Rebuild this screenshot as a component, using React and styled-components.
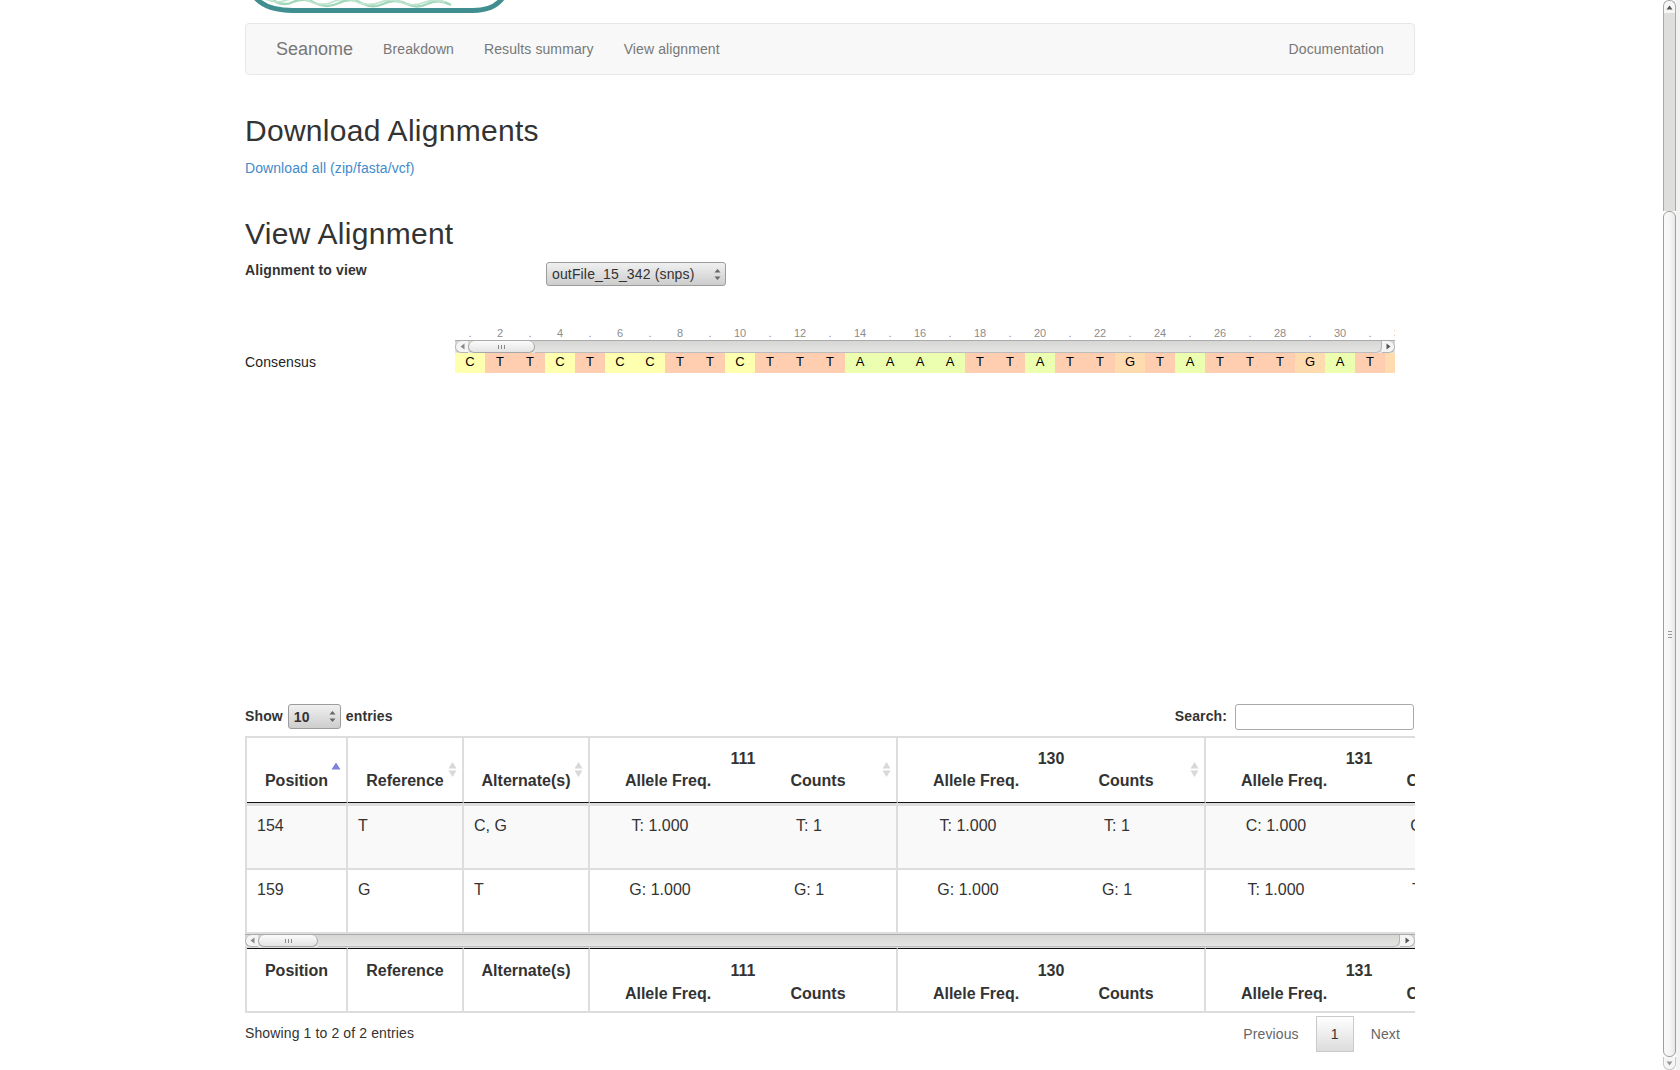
import React from "react";
import styled, { createGlobalStyle } from "styled-components";

const sequence = "CTTCTCCTTCTTTAAAATTATTGTATTTGATG".split("");

const baseColors = {
  A: "#ecffb0",
  C: "#ffffb0",
  G: "#ffdcb0",
  T: "#ffcdb0",
};

const samples = ["111", "130", "131"];

const rows = [
  { position: "154", reference: "T", alternates: "C, G", calls: ["T", "T", "C"] },
  { position: "159", reference: "G", alternates: "T", calls: ["G", "G", "T"] },
];

const Columns = () => (
  <colgroup>
    <col style={{ width: 101 }} />
    <col style={{ width: 116 }} />
    <col style={{ width: 126 }} />
    <col style={{ width: 308 }} />
    <col style={{ width: 308 }} />
    <col style={{ width: 308 }} />
  </colgroup>
);

const SortIcon = ({ active }) => (
  <SortMark>
    {active ? (
      <svg width="10" height="8" viewBox="0 0 10 8">
        <path d="M5 0.5 L9.5 7.5 L0.5 7.5 Z" fill="#7f7fdc" />
      </svg>
    ) : (
      <svg width="9" height="15" viewBox="0 0 9 15">
        <path d="M4.5 0 L8.5 6.5 L0.5 6.5 Z" fill="#d8d8d8" />
        <path d="M4.5 15 L8.5 8.5 L0.5 8.5 Z" fill="#d8d8d8" />
      </svg>
    )}
  </SortMark>
);

const SelectArrows = () => (
  <ArrowsMark>
    <svg width="7" height="13" viewBox="0 0 7 13">
      <path d="M3.5 1 L6.5 4.5 L0.5 4.5 Z" fill="#666" />
      <path d="M3.5 12 L6.5 8.5 L0.5 8.5 Z" fill="#666" />
    </svg>
  </ArrowsMark>
);

const HScroll = ({ thumb, endWidth }) => (
  <ScrollBar>
    <LeftCap>
      <svg width="5" height="7" viewBox="0 0 5 7">
        <path d="M4.5 0.5 L4.5 6.5 L0.5 3.5 Z" fill="#888" />
      </svg>
    </LeftCap>
    <ScrollThumb $width={thumb}>
      <Grip />
    </ScrollThumb>
    <ScrollTrack />
    <RightCap $width={endWidth}>
      <svg width="5" height="7" viewBox="0 0 5 7">
        <path d="M0.5 0.5 L0.5 6.5 L4.5 3.5 Z" fill="#555" />
      </svg>
    </RightCap>
  </ScrollBar>
);

const Logo = () => (
  <LogoClip>
    <svg width="270" height="14" viewBox="0 0 270 14">
      <path
        d="M28 0 q10 7 20 2 q12 -5 22 1 q12 6 24 0 q12 -6 22 0 q12 6 22 1 q12 -6 24 0 q10 5 20 0 q12 -6 24 1"
        fill="none"
        stroke="#a3d8bb"
        strokeWidth="2.4"
      />
      <path
        d="M20 -1 q12 5 22 1 q12 -4 24 2 q12 5 24 -1 q12 -4 22 1 q12 5 24 0 q10 -4 22 1 q12 4 22 -1 q10 -3 20 0"
        fill="none"
        stroke="#bfe5d0"
        strokeWidth="1.8"
      />
      <path
        d="M9 -4 Q20 10.5 48 10.5 L228 10.5 Q250 10.5 259 -4"
        fill="none"
        stroke="#418e91"
        strokeWidth="4.8"
      />
    </svg>
  </LogoClip>
);

const App = () => (
  <Shell>
    <GlobalStyle />
    <Main>
      <Logo />
      <Navbar>
        <Brand>Seanome</Brand>
        <NavLink>Breakdown</NavLink>
        <NavLink>Results summary</NavLink>
        <NavLink>View alignment</NavLink>
        <NavRight>
          <NavLink>Documentation</NavLink>
        </NavRight>
      </Navbar>

      <FirstHeading>Download Alignments</FirstHeading>
      <TextLink>Download all (zip/fasta/vcf)</TextLink>

      <SecondHeading>View Alignment</SecondHeading>
      <PickerRow>
        <PickerLabel>Alignment to view</PickerLabel>
        <SelectWrap $width={180}>
          <Select defaultValue="snps">
            <option value="snps">outFile_15_342 (snps)</option>
          </Select>
          <SelectArrows />
        </SelectWrap>
      </PickerRow>

      <Viewer>
        <ConsensusLabel>Consensus</ConsensusLabel>
        <ViewerTrack>
          <Ruler>
            {sequence.map((_, i) => (
              <RulerTick key={i}>{i % 2 === 1 ? i + 1 : "."}</RulerTick>
            ))}
          </Ruler>
          <HScroll thumb={67} endWidth={13} />
          <BaseRow>
            {sequence.map((base, i) => (
              <Base key={i} $color={baseColors[base]}>
                {base}
              </Base>
            ))}
          </BaseRow>
        </ViewerTrack>
      </Viewer>

      <TableControls>
        <ControlLabel>
          Show
          <SelectWrap $width={53}>
            <CountSelect defaultValue="10">
              <option value="10">10</option>
            </CountSelect>
            <SelectArrows />
          </SelectWrap>
          entries
        </ControlLabel>
        <ControlLabel>
          Search:
          <SearchInput type="text" />
        </ControlLabel>
      </TableControls>

      <TableClip>
        <HeadTable>
          <Columns />
          <thead>
            <tr>
              <HeadCell>
                Position
                <SortIcon active />
              </HeadCell>
              <HeadCell>
                Reference
                <SortIcon />
              </HeadCell>
              <HeadCell>
                Alternate(s)
                <SortIcon />
              </HeadCell>
              {samples.map((sample) => (
                <HeadCell key={sample}>
                  {sample}
                  <HeadSplit>
                    <span>Allele Freq.</span>
                    <span>Counts</span>
                  </HeadSplit>
                  <SortIcon />
                </HeadCell>
              ))}
            </tr>
          </thead>
          <tbody>
            {rows.map((row, index) => (
              <BodyRow key={row.position} $odd={index === 0}>
                <BodyCell $first={index === 0}>{row.position}</BodyCell>
                <BodyCell $first={index === 0}>{row.reference}</BodyCell>
                <BodyCell $first={index === 0}>{row.alternates}</BodyCell>
                {row.calls.map((call, i) => (
                  <BodyCell key={i} $first={index === 0}>
                    <CallSplit>
                      <span>{call}: 1.000</span>
                      <span>{call}: 1</span>
                    </CallSplit>
                  </BodyCell>
                ))}
              </BodyRow>
            ))}
          </tbody>
        </HeadTable>
        <HScroll thumb={60} endWidth={15} />
        <FootTable>
          <Columns />
          <tfoot>
            <tr>
              <FootCell>Position</FootCell>
              <FootCell>Reference</FootCell>
              <FootCell>Alternate(s)</FootCell>
              {samples.map((sample) => (
                <FootCell key={sample}>
                  {sample}
                  <FootSplit>
                    <span>Allele Freq.</span>
                    <span>Counts</span>
                  </FootSplit>
                </FootCell>
              ))}
            </tr>
          </tfoot>
        </FootTable>
      </TableClip>

      <TableFooter>
        <InfoText>Showing 1 to 2 of 2 entries</InfoText>
        <Pagination>
          <PageLink>Previous</PageLink>
          <PageCurrent>1</PageCurrent>
          <PageLink>Next</PageLink>
        </Pagination>
      </TableFooter>
    </Main>

    <PageScroll>
      <PageCap>
        <svg width="7" height="5" viewBox="0 0 7 5">
          <path d="M3.5 0.5 L6.5 4.5 L0.5 4.5 Z" fill="#555" />
        </svg>
      </PageCap>
      <PageTrack />
      <PageThumb>
        <PageGrip />
      </PageThumb>
      <PageCapBottom>
        <svg width="7" height="5" viewBox="0 0 7 5">
          <path d="M3.5 4.5 L6.5 0.5 L0.5 0.5 Z" fill="#999" />
        </svg>
      </PageCapBottom>
    </PageScroll>
  </Shell>
);

export default App;

const GlobalStyle = createGlobalStyle`
  html, body {
    margin: 0;
    height: 1070px;
    overflow: hidden;
    background: #fff;
  }
  body {
    font-family: "Liberation Sans", Arial, sans-serif;
    font-size: 14px;
    line-height: 20px;
    letter-spacing: 0.12px;
    color: #333;
  }
  * {
    box-sizing: border-box;
  }
`;

const Shell = styled.div`
  display: flex;
  justify-content: space-between;
  height: 1070px;
  overflow: hidden;
`;

const Main = styled.div`
  width: 1170px;
  margin-left: 245px;
`;

const LogoClip = styled.div`
  height: 14px;
  margin-bottom: 9px;
  overflow: hidden;
  line-height: 0;
`;

const Navbar = styled.nav`
  display: flex;
  align-items: center;
  height: 52px;
  padding: 0 15px;
  background: #f8f8f8;
  border: 1px solid #e7e7e7;
  border-radius: 4px;
`;

const Brand = styled.a`
  padding: 0 15px;
  font-size: 18px;
  letter-spacing: 0;
  color: #777;
`;

const NavLink = styled.a`
  padding: 0 15px;
  letter-spacing: 0.1px;
  color: #777;
`;

const NavRight = styled.div`
  margin-left: auto;
`;

const FirstHeading = styled.h2`
  margin: 39px 0 11px;
  font-size: 30px;
  line-height: 33px;
  font-weight: 500;
  letter-spacing: 0.28px;
  color: #333;
`;

const SecondHeading = styled(FirstHeading)`
  margin: 39px 0 10px;
`;

const TextLink = styled.a`
  display: block;
  letter-spacing: 0.08px;
  color: #428bca;
`;

const PickerRow = styled.div`
  display: grid;
  grid-template-columns: 301px auto;
  justify-content: start;
  height: 66px;
`;

const PickerLabel = styled.label`
  font-weight: 700;
`;

const SelectWrap = styled.div`
  position: relative;
  width: ${(p) => p.$width}px;
  height: 24px;
  margin-top: 2px;
`;

const Select = styled.select`
  appearance: none;
  width: 100%;
  height: 100%;
  padding: 0 0 0 5px;
  border: 1px solid #9c9c9c;
  border-radius: 3px;
  background: linear-gradient(#f0f0f0, #cdcdcd);
  font-family: inherit;
  font-size: 14px;
  letter-spacing: 0.15px;
  color: #333;
`;

const CountSelect = styled(Select)`
  font-weight: 700;
`;

const ArrowsMark = styled.span`
  position: absolute;
  top: 6px;
  right: 5px;
  line-height: 0;
  pointer-events: none;
`;

const Viewer = styled.div`
  display: grid;
  grid-template-columns: 210px 940px;
`;

const ConsensusLabel = styled.div`
  padding-top: 26px;
  color: #222;
`;

const ViewerTrack = styled.div`
  width: 940px;
  overflow: hidden;
`;

const Ruler = styled.div`
  display: flex;
  height: 14px;
`;

const RulerTick = styled.span`
  flex: 0 0 30px;
  font-size: 11px;
  line-height: 14px;
  letter-spacing: 0;
  text-align: center;
  color: #8c8c8c;
`;

const ScrollBar = styled.div`
  display: flex;
  height: 13px;
  background: linear-gradient(#d6d6d4, #e6e6e4);
  border-top: 1px solid #aaa;
`;

const LeftCap = styled.div`
  display: flex;
  align-items: center;
  justify-content: center;
  flex: 0 0 13px;
  background: #f4f4f4;
  border: 1px solid #b5b5b5;
  border-top: 0;
  border-right: 0;
  border-radius: 6px 0 0 6px;
`;

const RightCap = styled(LeftCap)`
  flex: 0 0 ${(p) => p.$width}px;
  border: 1px solid #b5b5b5;
  border-top: 0;
  border-left: 0;
  border-radius: 0 6px 6px 0;
`;

const ScrollThumb = styled.div`
  display: flex;
  align-items: center;
  justify-content: center;
  flex: 0 0 ${(p) => p.$width}px;
  background: linear-gradient(#fbfbfb, #e4e4e4);
  border: 1px solid #a8a8a8;
  border-top: 0;
  border-radius: 6px;
`;

const Grip = styled.span`
  width: 7px;
  height: 4px;
  background: repeating-linear-gradient(90deg, #888 0 1px, transparent 1px 3px);
`;

const ScrollTrack = styled.div`
  flex: 1;
  border-bottom: 1px solid #bdbdbd;
  border-right: 1px solid #b5b5b5;
  border-radius: 0 0 6px 0;
`;

const BaseRow = styled.div`
  display: flex;
  height: 20px;
`;

const Base = styled.span`
  flex: 0 0 30px;
  font-size: 13px;
  line-height: 18px;
  letter-spacing: 0;
  text-align: center;
  color: #000;
  background: ${(p) => p.$color};
`;

const TableControls = styled.div`
  display: flex;
  justify-content: space-between;
  align-items: flex-start;
  height: 26px;
  margin: 331px 1px 6px 0;
`;

const ControlLabel = styled.label`
  display: flex;
  align-items: flex-start;
  gap: 5px;
  padding-top: 2px;
  font-weight: 700;
  > div {
    margin-top: -2px;
    height: 25px;
  }
`;

const SearchInput = styled.input`
  width: 179px;
  height: 26px;
  margin: -2px 0 0 3px;
  border: 1px solid #aaa;
  border-radius: 3px;
  background: #fff;
`;

const TableClip = styled.div`
  width: 1170px;
  overflow: hidden;
`;

const HeadTable = styled.table`
  table-layout: fixed;
  width: 1269px;
  border-collapse: separate;
  border-spacing: 0;
  border-left: 2px solid #ddd;
  border-top: 2px solid #ddd;
  font-size: 16px;
  line-height: 22px;
  letter-spacing: 0;
`;

const FootTable = styled(HeadTable)`
  border-top: 1px solid #ddd;
  border-bottom: 2px solid #ddd;
`;

const HeadCell = styled.th`
  position: relative;
  height: 65px;
  padding: 10px 0 10px;
  vertical-align: bottom;
  text-align: center;
  font-weight: 700;
  border-right: 2px solid #ddd;
  border-bottom: 1px solid #111;
`;

const HeadSplit = styled.div`
  display: grid;
  grid-template-columns: 156px 144px;
  text-align: center;
`;

const FootSplit = styled(HeadSplit)`
  margin-top: 1px;
`;

const SortMark = styled.span`
  position: absolute;
  top: 24px;
  right: 5px;
  line-height: 0;
`;

const BodyRow = styled.tr`
  background: ${(p) => (p.$odd ? "#f9f9f9" : "#fff")};
`;

const BodyCell = styled.td`
  height: ${(p) => (p.$first ? "67px" : "64px")};
  padding: 9px 0 0 10px;
  vertical-align: top;
  border-right: 2px solid #ddd;
  border-bottom: 2px solid #ddd;
  border-top: ${(p) => (p.$first ? "3px solid #ddd" : "0")};
`;

const CallSplit = styled.div`
  display: grid;
  grid-template-columns: 120px 178px;
  text-align: center;
`;

const FootCell = styled.th`
  height: 63px;
  padding: 11px 0 0;
  vertical-align: top;
  text-align: center;
  font-weight: 700;
  border-right: 2px solid #ddd;
  border-top: 1px solid #111;
`;

const TableFooter = styled.div`
  display: flex;
  justify-content: space-between;
  align-items: center;
  height: 36px;
  margin-top: 3px;
`;

const InfoText = styled.span`
  margin-bottom: 2px;
`;

const Pagination = styled.div`
  display: flex;
  align-items: center;
`;

const PageLink = styled.a`
  padding: 0 17px;
  color: #666;
  &:last-child {
    padding-right: 15px;
  }
`;

const PageCurrent = styled.a`
  display: flex;
  align-items: center;
  justify-content: center;
  width: 38px;
  height: 36px;
  background: linear-gradient(#fff, #dcdcdc);
  border: 1px solid #cacaca;
  color: #333;
`;

const PageScroll = styled.aside`
  display: flex;
  flex-direction: column;
  flex: 0 0 17px;
  height: 1070px;
  padding-right: 4px;
  background: linear-gradient(90deg, #fff 13px, #f3f2f1 13px);
`;

const PageCap = styled.div`
  display: flex;
  align-items: center;
  justify-content: center;
  flex: 0 0 13px;
  background: #f6f6f6;
  border: 1px solid #a8a8a8;
  border-bottom: 0;
  border-radius: 6px 6px 0 0;
`;

const PageCapBottom = styled(PageCap)`
  border: 1px solid #c8c8c8;
  border-top: 0;
  border-radius: 0 0 6px 6px;
`;

const PageTrack = styled.div`
  flex: 0 0 198px;
  background: #dededc;
  border-left: 1px solid #a8a8a8;
  border-right: 1px solid #a8a8a8;
`;

const PageThumb = styled.div`
  display: flex;
  align-items: center;
  justify-content: center;
  flex: 1;
  background: linear-gradient(90deg, #fafafa, #f4f4f4 60%, #e6e6e6);
  border: 1px solid #a0a0a0;
  border-radius: 6px;
`;

const PageGrip = styled.span`
  width: 4px;
  height: 7px;
  background: repeating-linear-gradient(#999 0 1px, transparent 1px 3px);
`;
